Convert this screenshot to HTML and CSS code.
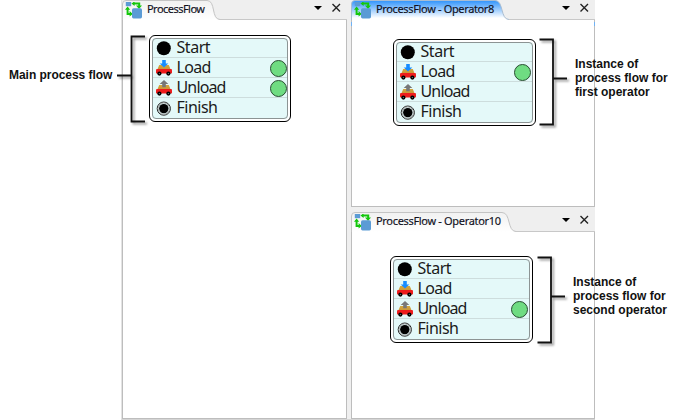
FILE: index.html
```html
<!DOCTYPE html>
<html lang="en">
<head>
<meta charset="utf-8">
<title>ProcessFlow</title>
<link rel="stylesheet" href="styles.css">
</head>
<body>
<svg class="defs" aria-hidden="true">
  <defs>
    <linearGradient id="active" x1="0" y1="0" x2="0" y2="1"><stop offset="0" stop-color="#2f93fb"/><stop offset=".9" stop-color="#ffffff"/></linearGradient>
    <linearGradient id="idle" x1="0" y1="0" x2="0" y2="1"><stop offset="0" stop-color="#f1f1f1"/><stop offset="1" stop-color="#ffffff"/></linearGradient>
    <linearGradient id="load" x1="0" y1="0" x2="0" y2="1"><stop offset="0" stop-color="#d3a640"/><stop offset="1" stop-color="#c99637"/></linearGradient>
  </defs>
  <symbol id="flow" viewBox="0 0 18 17">
    <path d="M.8 0h5.4v4.2H.8z" fill="#5b9bd5"/>
    <path d="M8 1.4h6.2V4M2.6 6v5.9H6" fill="none" stroke="#14c70c" stroke-width="2"/>
    <path d="M6.4 1.4l3.2-1.9v4.6zM11 3.4h6l-3 3.6zM0 7.8h5.2L2.6 4.4zM4.6 9l3.2 2.9-3.2 2.5z" fill="#14c70c"/>
    <rect x="7" y="6.2" width="10" height="10.2" rx="1.6" fill="#5b9bd5"/>
  </symbol>
  <symbol id="cart" viewBox="0 0 16 16">
    <path d="M1.4 9.6l1.8-4.6h9.6l1.8 4.6z" fill="url(#load)"/>
    <path d="M0 10.2q0-1.1 1-1.1h14q1 0 1 1.1v2.6q0 .8-.8.8H.8q-.8 0-.8-.8z" fill="#ee1c1c"/>
    <circle cx="3.4" cy="13.6" r="2.1"/><circle cx="12.4" cy="13.6" r="2.1"/>
    <circle cx="3.4" cy="13.6" r=".7" fill="#777"/><circle cx="12.4" cy="13.6" r=".7" fill="#777"/>
  </symbol>
  <symbol id="i-start" viewBox="0 0 16 16"><circle cx="7.8" cy="8.2" r="7"/></symbol>
  <symbol id="i-load" viewBox="0 0 16 16"><use href="#cart"/><path d="M6.2 0h3.6v3.5h2.5L8 7.4 3.7 3.5h2.5z" fill="#168cff"/></symbol>
  <symbol id="i-unload" viewBox="0 0 16 16"><use href="#cart"/><path d="M6.2 7.2h3.6V4h2.5L8 0 3.7 4h2.5z" fill="#777"/></symbol>
  <symbol id="i-finish" viewBox="0 0 16 16"><circle cx="7.8" cy="7.6" r="6.6" fill="#e4f9f9" stroke="#222" stroke-width="1"/><circle cx="7.8" cy="7.6" r="5.7" fill="none" stroke="#999" stroke-width=".9"/><circle cx="7.8" cy="7.6" r="4.7"/></symbol>
  <symbol id="controls" viewBox="0 0 32 12"><path d="M1 4h8L5 8z"/><path d="M19.5 2l7.5 7.5M27 2l-7.5 7.5" stroke="#222" stroke-width="1.4"/></symbol>
</svg>
<main class="app">
  <section class="panel panel-main">
    <header class="bar">
      <svg class="tab-shape" width="98" height="20"><path d="M.5 20V4Q.5.5 4 .5H85C94 .5 89 19.5 98 19.5V20z" fill="url(#idle)"/><path d="M.5 20V4Q.5.5 4 .5H85C94 .5 89 19.5 98 19.5" fill="none" stroke="#c4c4c4"/></svg>
      <svg class="tab-icon" width="18" height="17"><use href="#flow"/></svg>
      <span class="tab-title t1">ProcessFlow</span>
      <svg class="controls" width="32" height="12"><use href="#controls"/></svg>
    </header>
    <div class="canvas">
      <ul class="node n1">
        <li><svg><use href="#i-start"/></svg><span class="w-start">Start</span></li>
        <li><svg><use href="#i-load"/></svg><span class="w-load">Load</span><i class="token"></i></li>
        <li><svg><use href="#i-unload"/></svg><span class="w-unload">Unload</span><i class="token"></i></li>
        <li><svg><use href="#i-finish"/></svg><span class="w-finish">Finish</span></li>
      </ul>
    </div>
  </section>
  <div class="stack">
    <section class="panel panel-first">
      <header class="bar">
        <svg class="tab-shape" width="158" height="20"><path d="M.5 20V4Q.5.5 4 .5H144C153 .5 149 19.5 158 19.5V20z" fill="url(#active)"/><path d="M.5 20V4Q.5.5 4 .5H144C153 .5 149 19.5 158 19.5" fill="none" stroke="#a9bdd2"/></svg>
        <svg class="tab-icon" width="18" height="17"><use href="#flow"/></svg>
        <span class="tab-title t2">ProcessFlow - Operator8</span>
        <svg class="controls" width="32" height="12"><use href="#controls"/></svg>
      </header>
      <div class="canvas focused">
        <ul class="node n2">
          <li><svg><use href="#i-start"/></svg><span class="w-start">Start</span></li>
          <li><svg><use href="#i-load"/></svg><span class="w-load">Load</span><i class="token"></i></li>
          <li><svg><use href="#i-unload"/></svg><span class="w-unload">Unload</span></li>
          <li><svg><use href="#i-finish"/></svg><span class="w-finish">Finish</span></li>
        </ul>
      </div>
    </section>
    <section class="panel panel-second">
      <header class="bar">
        <svg class="tab-shape" width="165" height="20"><path d="M.5 20V4Q.5.5 4 .5H151C160 .5 156 19.5 165 19.5V20z" fill="url(#idle)"/><path d="M.5 20V4Q.5.5 4 .5H151C160 .5 156 19.5 165 19.5" fill="none" stroke="#c4c4c4"/></svg>
        <svg class="tab-icon" width="18" height="17"><use href="#flow"/></svg>
        <span class="tab-title t3">ProcessFlow - Operator10</span>
        <svg class="controls" width="32" height="12"><use href="#controls"/></svg>
      </header>
      <div class="canvas">
        <ul class="node n3">
          <li><svg><use href="#i-start"/></svg><span class="w-start">Start</span></li>
          <li><svg><use href="#i-load"/></svg><span class="w-load">Load</span></li>
          <li><svg><use href="#i-unload"/></svg><span class="w-unload">Unload</span><i class="token"></i></li>
          <li><svg><use href="#i-finish"/></svg><span class="w-finish">Finish</span></li>
        </ul>
      </div>
    </section>
  </div>
</main>
<svg class="brackets" width="693" height="420">
  <path d="M145 36.5H131.5V121.5H145M117 75.5h14"/>
  <path d="M539.5 39.5H553V124.5H539.5M553 78.5h14"/>
  <path d="M537.5 257.5H551V342.5H537.5M551 296.5h14"/>
</svg>
<p class="note note-main">Main process flow</p>
<p class="note note-first">Instance of<br>process flow for<br>first operator</p>
<p class="note note-second">Instance of<br>process flow for<br>second operator</p>
</body>
</html>
```

FILE: styles.css
```css
* { box-sizing: border-box; }
body { margin: 0; width: 693px; height: 420px; position: relative; overflow: hidden; background: #fff; }
.defs { position: absolute; width: 0; height: 0; }
.app { display: flex; gap: 4px; width: 474px; height: 420px; margin-left: 121px; background: #efefef; border-left: 1px solid #e3e3e3; border-bottom: 1px solid #d5d5d5; }
.panel { display: flex; flex-direction: column; }
.panel-main { width: 225px; height: 419px; }
.stack { flex: 1; display: flex; flex-direction: column; gap: 5px; }
.panel-first { height: 207px; }
.panel-second { height: 207px; }
.bar { display: grid; grid-template-columns: 25px 1fr 45px; height: 20px; flex: none; align-items: center; border-bottom: 1px solid #c8c8c8; position: relative; background: #efefef; }
.tab-shape { position: absolute; left: 0; top: 0; display: block; }
.tab-icon { position: relative; margin-left: 3px; margin-top: 1px; overflow: visible; }
.tab-title { position: relative; font: 11px/18px "Noto Sans", sans-serif; color: #10101c; white-space: nowrap; margin-top: -1px; -webkit-text-stroke: .15px #10101c; }
.t1 { letter-spacing: -.53px; }
.t2 { letter-spacing: -.35px; }
.t3 { letter-spacing: -.32px; }
.controls { margin-left: 11px; margin-top: -4px; }
.canvas { flex: 1; position: relative; background: #fff; border: solid #bdbdbd; border-width: 0 1px 1px; }
.focused::before, .focused::after { content: ""; position: absolute; top: 2px; width: 1px; height: 4px; background: #6eb2f6; }
.focused::before { left: -1px; }
.focused::after { right: -1px; }
.node { position: absolute; margin: 0; padding: 2px; list-style: none; width: 142px; height: 87px; border: 1.5px solid #000; border-radius: 6px; background: linear-gradient(#e4f9f9, #e4f9f9) content-box, #fff; }
.node::after { content: ""; position: absolute; inset: 2px; border: 1px solid #8c9494; border-radius: 4px; }
.n1 { left: 26px; top: 15px; }
.n2 { left: 41px; top: 19px; width: 143px; }
.n3 { left: 38px; top: 24px; width: 143px; }
.node li { display: flex; align-items: center; height: 20px; padding-left: 4px; border-bottom: 1px solid #cddddd; }
.node li:last-child { border-bottom: 0; }
.node li svg { width: 16px; height: 16px; flex: none; overflow: visible; margin-top: 1px; }
.node li span { font: 16px/20px "Noto Sans", sans-serif; color: #1b1b1b; margin-left: 4.5px; margin-top: -2px; white-space: nowrap; }
.node .w-start { letter-spacing: -.45px; }
.node .w-load { letter-spacing: -.7px; }
.node .w-unload { letter-spacing: -.85px; }
.node .w-finish { letter-spacing: -.5px; }
.token { width: 17px; height: 17px; flex: none; border: 1.3px solid #294c32; border-radius: 50%; background: #6fdc82; margin-left: auto; margin-right: 1px; position: relative; top: 1px; z-index: 1; }
.n2 .token, .n3 .token { margin-right: 2px; }
.brackets { position: absolute; left: 0; top: 0; fill: none; stroke: #111; stroke-width: 1.8; filter: drop-shadow(2px 2px 1px #0006); }
.note { position: absolute; margin: 0; font: bold 12px/14px "Liberation Sans", Arial, sans-serif; color: #111; white-space: nowrap; }
.note-main { left: 9px; top: 68px; letter-spacing: -.04px; }
.note-first { left: 575px; top: 57px; }
.note-second { left: 573px; top: 275px; }
```
